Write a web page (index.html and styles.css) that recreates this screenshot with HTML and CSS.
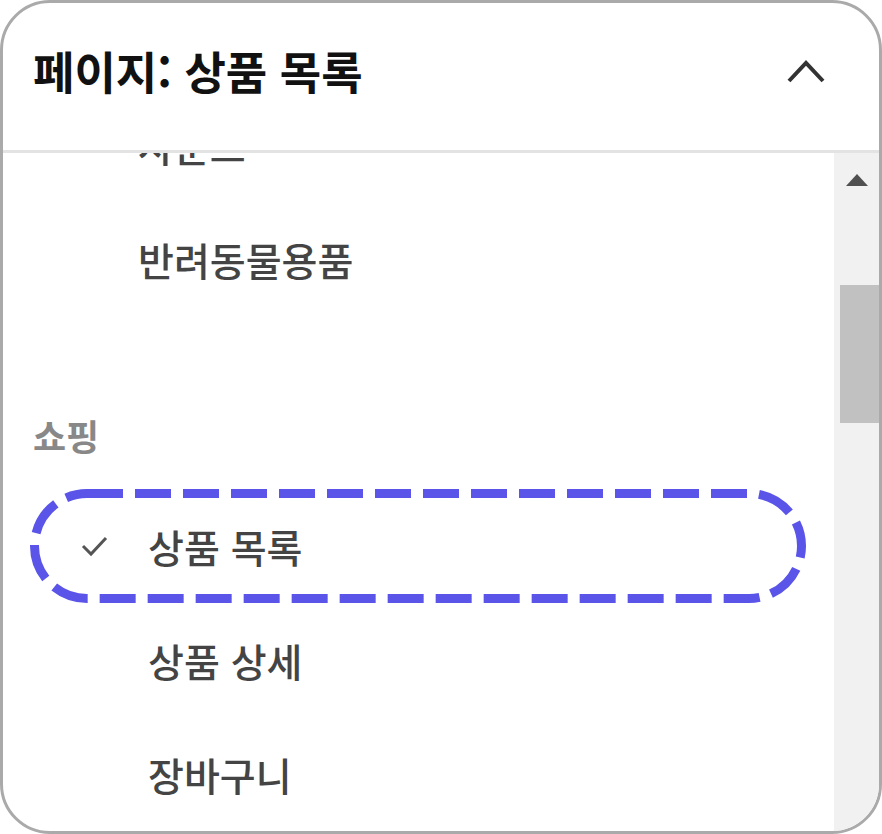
FILE: index.html
```html
<!DOCTYPE html>
<html lang="ko">

<head>
  <meta charset="UTF-8">
  <meta name="viewport" content="width=device-width, initial-scale=1.0">
  <title>페이지 선택</title>
  <link rel="stylesheet" href="styles.css">
</head>

<body>
  <div class="dropdown">
    <div class="header">
      <span class="title">페이지: 상품 목록</span>
      <svg class="chevron" width="38" height="24" viewBox="0 0 38 24">
        <polyline points="2,22 19,4 36,22" fill="none" stroke="#333" stroke-width="4" />
      </svg>
    </div>
    <div class="body">
      <div class="list">
        <div class="scroll">
          <div class="item item-prev">사운드</div>
          <div class="item item-prev">반려동물용품</div>
          <div class="group">쇼핑</div>
          <div class="item selected">
            <svg class="check" width="28" height="24" viewBox="0 0 28 24">
              <polyline points="3,12 11,20 26,4" fill="none" stroke="#555" stroke-width="3" />
            </svg>
            <span>상품 목록</span>
            <svg class="ring" width="776" height="114" viewBox="0 0 776 114">
              <rect x="4.5" y="4.5" width="767" height="105" rx="52.5" fill="none" stroke="#5a54e8"
                stroke-width="9" stroke-dasharray="36 12" />
            </svg>
          </div>
          <div class="item">상품 상세</div>
          <div class="item">장바구니</div>
        </div>
      </div>
      <div class="scrollbar">
        <div class="arrow"></div>
        <div class="thumb"></div>
      </div>
    </div>
  </div>
</body>

</html>
```

FILE: styles.css
```css
body {
  margin: 0;
  background: #fff;
  font-family: "Noto Sans CJK KR", "Noto Sans", sans-serif;
}

.dropdown {
  width: 882px;
  height: 834px;
  box-sizing: border-box;
  border: 3px solid #aaa;
  border-radius: 50px;
  overflow: hidden;
  display: flex;
  flex-direction: column;
}

.header {
  height: 150px;
  flex-shrink: 0;
  box-sizing: border-box;
  padding: 0 54px 12px 30px;
  display: flex;
  align-items: center;
  justify-content: space-between;
  border-bottom: 3px solid #e3e3e3;
}

.title {
  font-size: 45px;
  font-weight: 700;
  color: #111;
}

.body {
  flex: 1;
  display: flex;
  min-height: 0;
}

.list {
  flex: 1;
  overflow: hidden;
}

.scroll {
  margin-top: -65px;
}

.item {
  position: relative;
  height: 114px;
  display: flex;
  align-items: center;
  padding-left: 145px;
  font-size: 39px;
  font-weight: 500;
  color: #444;
}

.item-prev {
  padding-left: 135px;
}

.selected {
  padding-left: 77px;
}

.check {
  margin-right: 40px;
}

.ring {
  position: absolute;
  left: 27px;
  top: 0;
}

.group {
  height: 173px;
  box-sizing: border-box;
  padding: 92px 0 0 30px;
  line-height: 54px;
  font-size: 36px;
  font-weight: 700;
  color: #888;
}

.scrollbar {
  width: 45px;
  flex-shrink: 0;
  background: #f1f1f1;
  display: flex;
  flex-direction: column;
  align-items: center;
}

.arrow {
  margin-top: 21px;
  margin-left: 1px;
  width: 0;
  height: 0;
  border-left: 11px solid transparent;
  border-right: 11px solid transparent;
  border-bottom: 12px solid #505050;
}

.thumb {
  margin-top: 99px;
  align-self: flex-end;
  width: 39px;
  height: 138px;
  background: #c1c1c1;
}
```
